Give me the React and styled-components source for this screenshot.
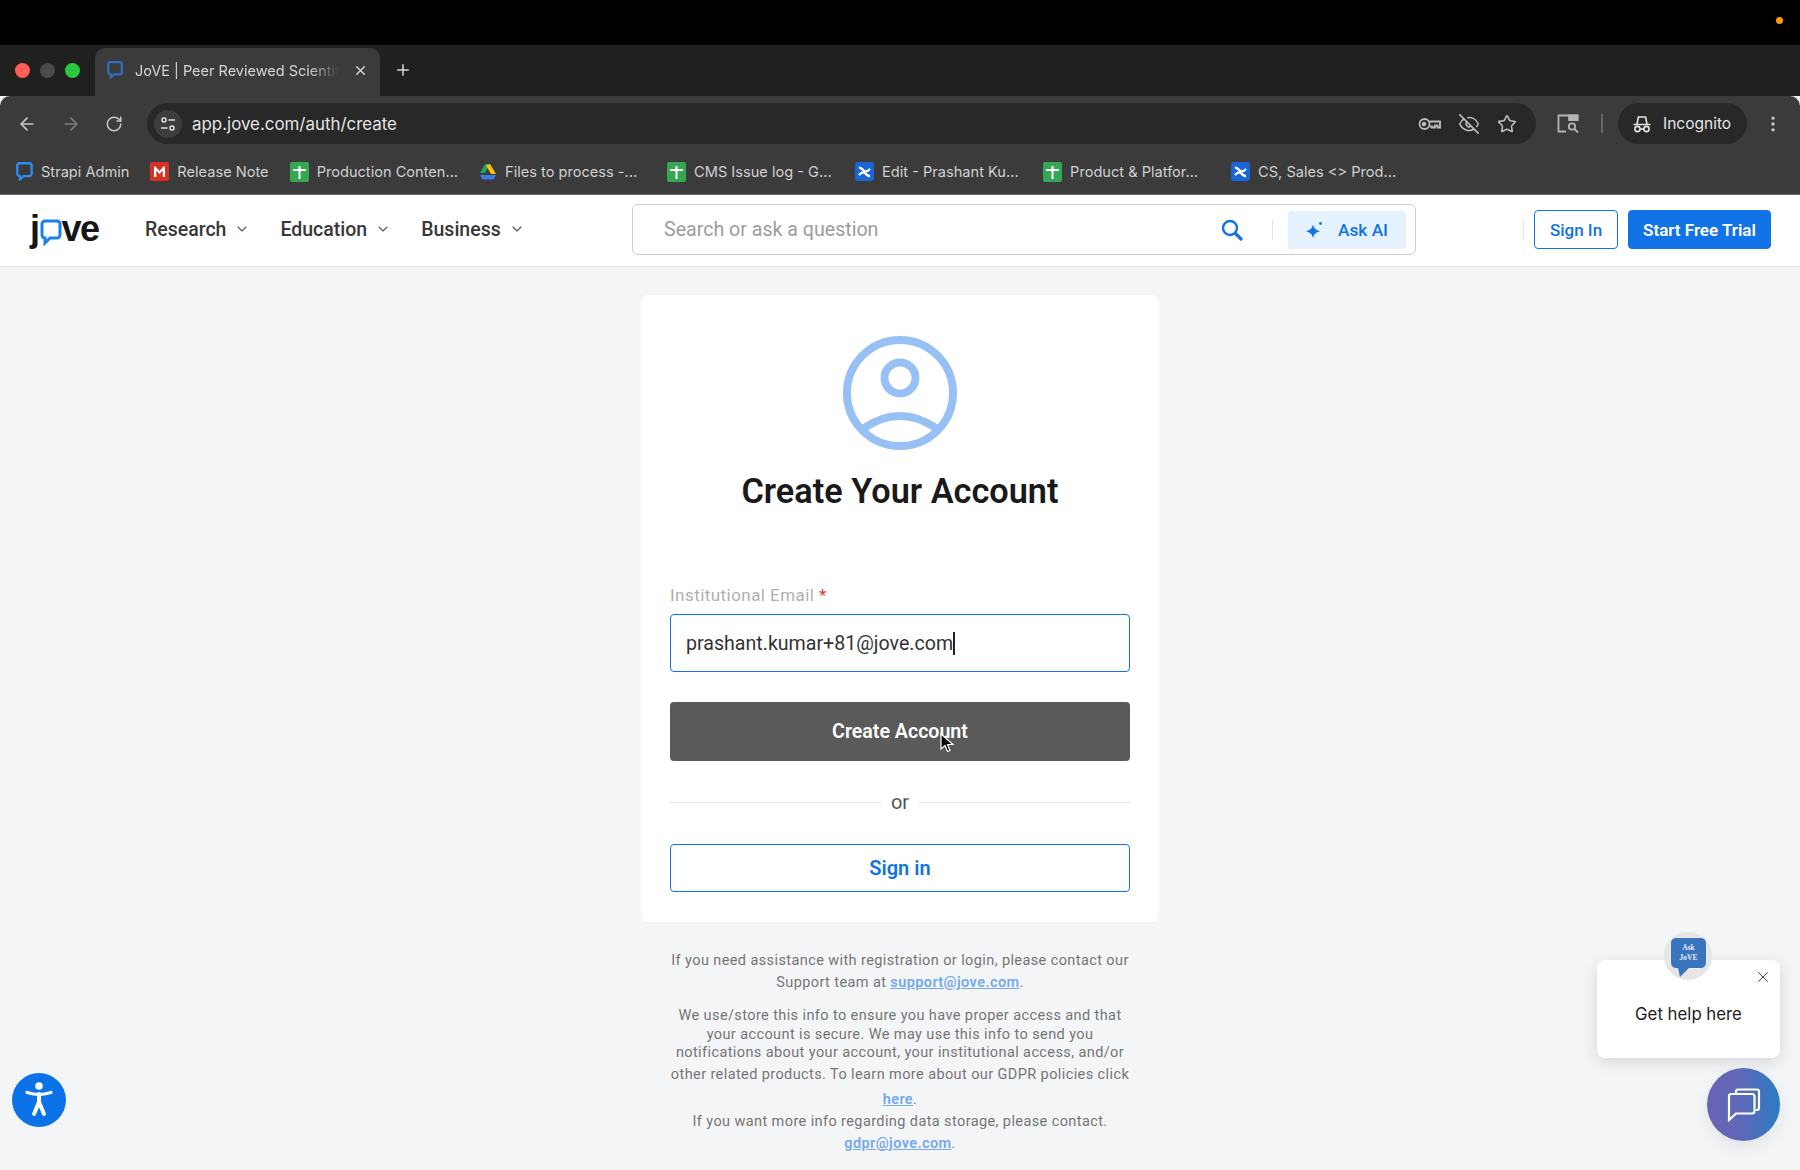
import React from 'react'
import styled, { createGlobalStyle } from 'styled-components'
import { ArrowLeft, ArrowRight, RotateCw, Plus, X, Star, EyeOff, EllipsisVertical, ChevronDown } from 'lucide-react'

const GlobalStyle = createGlobalStyle`
  html, body { margin: 0; padding: 0; background: #f4f5f7; }
  body { font-family: Roboto, "Liberation Sans", sans-serif; }
  * { box-sizing: border-box; }
`

const Screen = styled.div`
  position: relative;
  width: 1800px;
  height: 1170px;
  overflow: hidden;
  background: #f4f5f7;
`

/* browser chrome */
const MenuBar = styled.div`
  height: 45px;
  background: #000;
  display: flex;
  align-items: center;
  justify-content: flex-end;
  padding: 0 17px 5px 0;
`
const OrangeDot = styled.span`
  width: 7px;
  height: 7px;
  border-radius: 50%;
  background: #ff9a0a;
`
const TabStrip = styled.div`
  height: 51px;
  background: #202020;
  display: flex;
  align-items: flex-end;
  padding-left: 15px;
`
const Traffic = styled.div`
  display: flex;
  gap: 10px;
  align-self: flex-start;
  margin-top: 18px;
  width: 80px;
`
const Light = styled.span`
  width: 15px;
  height: 15px;
  border-radius: 50%;
  background: ${p => p.$color};
`
const Tab = styled.div`
  width: 285px;
  height: 48px;
  background: #3b3b3b;
  border-radius: 10px 10px 0 0;
  display: flex;
  align-items: center;
  padding: 0 12px 4px 12px;
  color: #d6d6d6;
  svg.fav { flex: none; margin-right: 12px; }
`
const TabTitle = styled.span`
  flex: 1;
  white-space: nowrap;
  overflow: hidden;
  font-family: Inter, sans-serif;
  font-size: 14.5px;
  -webkit-mask-image: linear-gradient(to right, #000 85%, transparent 100%);
  mask-image: linear-gradient(to right, #000 85%, transparent 100%);
`
const TabClose = styled.span`
  display: flex;
  margin-left: 14px;
`
const NewTab = styled.div`
  align-self: center;
  margin: 2px 0 4px 14px;
  color: #d6d6d6;
  display: flex;
`
const Toolbar = styled.div`
  height: 52px;
  background: #3b3b3b;
  border-radius: 10px 10px 0 0;
  display: flex;
  align-items: center;
  padding: 3px 0 0 17px;
  color: #c8c8c8;
`
const NavIcons = styled.div`
  display: flex;
  align-items: center;
  gap: 24px;
  width: 130px;
`
const Omnibox = styled.div`
  width: 1389px;
  height: 41px;
  border-radius: 21px;
  background: #282828;
  display: flex;
  align-items: center;
  padding: 0 19px 0 7px;
`
const SiteInfo = styled.span`
  width: 28px;
  height: 28px;
  border-radius: 50%;
  background: #3d3d3d;
  display: flex;
  align-items: center;
  justify-content: center;
  margin-right: 10px;
`
const Url = styled.span`
  flex: 1;
  color: #e4e4e4;
  font-family: Inter, sans-serif;
  font-size: 16.9px;
`
const OmniIcons = styled.div`
  display: flex;
  align-items: center;
  gap: 17px;
  color: #bcbcbc;
`
const ToolRight = styled.div`
  display: flex;
  align-items: center;
  margin-left: 21px;
`
const ToolSep = styled.span`
  width: 2px;
  height: 19px;
  background: #666;
  margin: 0 15px 0 22px;
`
const IncognitoPill = styled.div`
  width: 129px;
  height: 41px;
  border-radius: 21px;
  background: #282828;
  color: #e4e4e4;
  display: flex;
  align-items: center;
  gap: 12px;
  padding-left: 15px;
  font-family: Inter, sans-serif;
  font-size: 15.5px;
  margin-right: 16px;
`
const Bookmarks = styled.div`
  height: 47px;
  background: #3b3b3b;
  border-bottom: 1px solid #6a6a6a;
  display: flex;
  align-items: center;
  padding: 1px 0 0 16px;
  gap: 21px;
`
const Bookmark = styled.div`
  display: flex;
  align-items: center;
  gap: 8px;
  min-width: ${p => (p.$clipped ? '167px' : '0')};
  color: #d0d0d0;
  font-family: Inter, sans-serif;
  font-size: 14.6px;
  white-space: nowrap;
`

/* site header */
const Header = styled.header`
  height: 72px;
  background: #fff;
  border-bottom: 1px solid #e4e4e6;
  display: flex;
  align-items: center;
  padding: 0 29px 3px 30px;
`
const Logo = styled.div`
  width: 115px;
  flex: none;
  display: flex;
  align-items: center;
  font-family: "Liberation Sans", sans-serif;
  font-weight: 700;
  font-size: 36px;
  letter-spacing: -1.5px;
  color: #161616;
  line-height: 1;
  svg { margin: 6px 0 0 1px; }
`
const MainNav = styled.nav`
  width: 487px;
  flex: none;
  display: flex;
  align-items: center;
`
const NavItem = styled.div`
  display: flex;
  align-items: center;
  gap: 8px;
  font-size: 19.5px;
  font-weight: 500;
  color: #383838;
  margin-right: 30px;
  svg { color: #555; }
`
const SearchBox = styled.div`
  width: 784px;
  height: 51px;
  flex: none;
  margin-top: 1px;
  border: 1px solid #cfcfcf;
  border-radius: 6px;
  display: flex;
  align-items: center;
  padding: 0 9px 0 31px;
`
const Placeholder = styled.span`
  flex: 1;
  font-size: 19.6px;
  color: #9c9c9c;
`
const SearchDivider = styled.span`
  width: 1px;
  height: 20px;
  background: #e3e3e3;
  margin: 0 15px 0 29px;
`
const AskButton = styled.button`
  width: 118px;
  height: 38px;
  border: 0;
  border-radius: 4px;
  background: #e5f1fd;
  color: #1273e6;
  font: 500 17.3px Roboto, sans-serif;
  display: flex;
  align-items: center;
  justify-content: center;
  gap: 15px;
`
const HeaderRight = styled.div`
  margin: 1px 0 0 auto;
  display: flex;
  align-items: center;
  gap: 10px;
`
const HeaderDivider = styled.span`
  width: 1px;
  height: 20px;
  background: #e6e6e6;
`
const HeaderButton = styled.button`
  height: 39px;
  width: ${p => p.$width}px;
  border: 1px solid #1273e6;
  border-radius: 4px;
  background: ${p => (p.$solid ? '#1273e6' : '#fff')};
  color: ${p => (p.$solid ? '#fff' : '#1273e6')};
  font: ${p => (p.$solid ? 600 : 500)} 17px Roboto, sans-serif;
`

/* form card */
const Main = styled.main`
  display: flex;
  flex-direction: column;
  align-items: center;
  padding-top: 28px;
`
const Card = styled.section`
  width: 518px;
  height: 627px;
  background: #fff;
  border-radius: 8px;
  padding: 41px 29px 30px;
  display: flex;
  flex-direction: column;
  align-items: center;
`
const Title = styled.h1`
  margin: 19px 0 0;
  font-size: 34.3px;
  line-height: 44px;
  font-weight: 600;
  color: #1a1a1a;
`
const FieldLabel = styled.label`
  align-self: flex-start;
  margin-top: 72px;
  font-size: 17px;
  line-height: 20px;
  letter-spacing: 0.45px;
  color: #b0b0b0;
  span { color: #e53935; }
`
const EmailBox = styled.div`
  width: 460px;
  height: 58px;
  margin-top: 9px;
  border: 1px solid #1273e6;
  border-radius: 4px;
  display: flex;
  align-items: center;
  padding-left: 15px;
  font-size: 19.6px;
  color: #333;
`
const Caret = styled.span`
  width: 1.5px;
  height: 23px;
  background: #222;
`
const CreateButton = styled.button`
  position: relative;
  width: 460px;
  height: 59px;
  margin-top: 30px;
  border: 0;
  border-radius: 4px;
  background: #5a5a5a;
  color: #fff;
  font: 600 19.6px Roboto, sans-serif;
`
const Pointer = styled.svg`
  position: absolute;
  left: 270px;
  top: 31px;
`
const OrRow = styled.div`
  width: 460px;
  margin: 30px 0 31px;
  height: 22px;
  display: flex;
  align-items: center;
  gap: 10px;
  font-size: 20px;
  color: #555;
  &::before, &::after {
    content: '';
    flex: 1;
    height: 1px;
    background: #e4e4e4;
  }
`
const SignInButton = styled.button`
  width: 460px;
  height: 48px;
  border: 1px solid #1273e6;
  border-radius: 4px;
  background: #fff;
  color: #1273e6;
  font: 600 20px Roboto, sans-serif;
`
const Notice = styled.div`
  width: 480px;
  margin-top: 28px;
  text-align: center;
  font-size: 14.5px;
  letter-spacing: 0.4px;
  color: #757575;
`
const NoticeBlock = styled.p`
  margin: ${p => p.$gap || 0}px 0 0;
  line-height: ${p => p.$line || 22}px;
`
const NoticeLink = styled.a`
  color: #74a9ee;
  font-weight: 600;
  text-decoration: underline;
`

/* floating widgets */
const AccessButton = styled.div`
  position: absolute;
  left: 12px;
  top: 1073px;
  width: 54px;
  height: 54px;
  border-radius: 50%;
  background: #0b72e7;
  display: flex;
  align-items: center;
  justify-content: center;
`
const HelpPopup = styled.div`
  position: absolute;
  left: 1597px;
  top: 960px;
  width: 183px;
  height: 98px;
  background: #fff;
  border-radius: 8px;
  box-shadow: 0 4px 16px rgba(0, 0, 0, 0.13);
  display: flex;
  align-items: center;
  justify-content: center;
  padding-top: 10px;
  font-family: Inter, sans-serif;
  font-size: 16.8px;
  color: #1c1c1c;
`
const PopupClose = styled.span`
  position: absolute;
  right: 8px;
  top: 8px;
  display: flex;
  color: #333;
`
const AskBadge = styled.div`
  position: absolute;
  left: 1664px;
  top: 932px;
  width: 48px;
  height: 48px;
  border-radius: 50%;
  background: #e6e6e6;
`
const BadgeBubble = styled.div`
  position: absolute;
  left: 6px;
  top: 5px;
  width: 37px;
  height: 32px;
  border-radius: 6px;
  border: 1px solid #e8eef6;
  background: #3a74bf;
  color: #e6eefa;
  font: 700 7.5px/10px "Liberation Serif", serif;
  display: flex;
  align-items: center;
  justify-content: center;
  text-align: center;
  &::after {
    content: '';
    position: absolute;
    left: 7px;
    bottom: -9px;
    border-left: 2px solid transparent;
    border-right: 9px solid transparent;
    border-top: 9px solid #3a74bf;
  }
`
const ChatButton = styled.div`
  position: absolute;
  left: 1707px;
  top: 1068px;
  width: 73px;
  height: 73px;
  border-radius: 50%;
  background: linear-gradient(90deg, #6a62b4 0%, #5f68b8 45%, #2a7cc4 100%);
  box-shadow: 0 6px 18px rgba(0, 0, 0, 0.08);
  display: flex;
  align-items: center;
  justify-content: center;
`

/* drawn icons */
const BubbleIcon = ({ color = '#2f6fc0', size = 16 }) => (
  <svg className="fav" width={size} height={size + 2} viewBox="0 0 16 18" fill="none">
    <path d="M3.5 1.2h9A2.3 2.3 0 0 1 14.8 3.5v7.5a2.3 2.3 0 0 1-2.3 2.3H7L3.6 16.5v-3.2A2.3 2.3 0 0 1 1.2 11V3.5a2.3 2.3 0 0 1 2.3-2.3Z" stroke={color} strokeWidth="2.2" />
  </svg>
)
const GmailIcon = () => (
  <svg width="19" height="19" viewBox="0 0 19 19">
    <rect width="19" height="19" rx="2" fill="#d93025" />
    <path d="M4 15V4.5h1.5L9.5 9l4-4.5H15V15h-2.3V8.6L9.5 12 6.3 8.6V15Z" fill="#fff" />
  </svg>
)
const SheetIcon = () => (
  <svg width="19" height="20" viewBox="0 0 19 20">
    <rect width="19" height="20" rx="2" fill="#34a853" />
    <path d="M3 7h13v2H3z M8.5 4h2v13h-2z" fill="#fff" />
  </svg>
)
const DriveIcon = () => (
  <svg width="18" height="17" viewBox="0 0 18 17">
    <path d="M6 1h5l-5 9H1Z" fill="#1fa463" />
    <path d="M11 1l6 10h-5L7 2.5Z" fill="#ffc107" />
    <path d="M1 12h16l-2.5 4.5h-11Z" fill="#3b7bea" />
  </svg>
)
const ConfluenceIcon = () => (
  <svg width="19" height="19" viewBox="0 0 19 19">
    <rect width="19" height="19" rx="3" fill="#1a66d6" />
    <path d="M4 6c3-1 4 3 6 3.5 2 .3 3-.5 5-2.5M4 13c2-2 3-3 5-2.5 2 .5 3 4 6 3.5" stroke="#fff" strokeWidth="2.4" fill="none" />
  </svg>
)
const TuneIcon = () => (
  <svg width="16" height="16" viewBox="0 0 16 16" fill="none" stroke="#e0e0e0" strokeWidth="1.5">
    <circle cx="4" cy="4" r="2" />
    <path d="M8.5 4H15M1 12h6.5" />
    <circle cx="12" cy="12" r="2" />
  </svg>
)
const KeyIcon = () => (
  <svg width="23" height="14" viewBox="0 0 23 14" fill="none" stroke="currentColor" strokeWidth="1.8">
    <circle cx="6.5" cy="7" r="5" />
    <circle cx="6" cy="7" r="1.4" fill="currentColor" />
    <path d="M11.5 4.5H22v6h-2.5V8.5H17v2h-3V9.5h-2.5" />
  </svg>
)
const LensIcon = () => (
  <svg width="22" height="20" viewBox="0 0 22 20" fill="none" stroke="#b4b4b4" strokeWidth="1.8">
    <path d="M9 17.5H1.5V1.5h19V7" />
    <path d="M12 1.5h8.5V6H12Z" fill="#b4b4b4" />
    <circle cx="15" cy="12.5" r="3.2" />
    <path d="M17.5 15l3.5 3.5" />
  </svg>
)
const IncognitoIcon = () => (
  <svg width="18" height="18" viewBox="0 0 18 18" fill="none" stroke="#e4e4e4" strokeWidth="1.6">
    <path d="M4 9l1.4-7h7.2L14 9M0.5 9.5h17" />
    <circle cx="4.5" cy="14" r="2.6" />
    <circle cx="13.5" cy="14" r="2.6" />
    <path d="M7 14h4" />
  </svg>
)
const SearchGlyph = () => (
  <svg width="22" height="22" viewBox="0 0 22 22" fill="none" stroke="#1273e6">
    <circle cx="9" cy="9" r="7" strokeWidth="2.4" />
    <path d="M14.5 14.5L20 20" strokeWidth="3.2" strokeLinecap="round" />
  </svg>
)
const SparkIcon = () => (
  <svg width="17" height="18" viewBox="0 0 17 18" fill="#1273e6">
    <path d="M7 3.5Q8 9 14 10.2Q8 11.5 7 17Q6 11.5 0 10.2Q6 9 7 3.5Z" />
    <circle cx="14.5" cy="2.5" r="1.4" />
  </svg>
)
const PersonIcon = () => (
  <svg width="114" height="114" viewBox="0 0 114 114" fill="none" stroke="#97c1f5" strokeWidth="8">
    <circle cx="57" cy="57" r="53" />
    <circle cx="57" cy="42" r="15.5" />
    <path d="M21 92Q57 68 93 92" />
  </svg>
)
const AccessIcon = () => (
  <svg width="28" height="38" viewBox="0 0 28 38" fill="none" stroke="#fff" strokeLinecap="round">
    <circle cx="14" cy="5" r="3.8" fill="#fff" stroke="none" />
    <path d="M2 11.5c4 1.2 8 2 12 2s8-.8 12-2" strokeWidth="3.2" />
    <path d="M14 13v8M14 21l-5 12M14 21l5 12" strokeWidth="4" />
  </svg>
)
const ChatIcon = () => (
  <svg width="34" height="34" viewBox="0 0 34 34" fill="none" stroke="#fff" strokeWidth="2.2">
    <path d="M9 5V3.5A2 2 0 0 1 11 1.5h19A2 2 0 0 1 32 3.5V20a2 2 0 0 1-2 2h-1" />
    <path d="M4 6h21a2.5 2.5 0 0 1 2.5 2.5V23a2.5 2.5 0 0 1-2.5 2.5H9L2 32V8a2 2 0 0 1 2-2Z" />
  </svg>
)

const BOOKMARKS = [
  { icon: <BubbleIcon color="#2f8cf0" size={17} />, label: 'Strapi Admin' },
  { icon: <GmailIcon />, label: 'Release Note' },
  { icon: <SheetIcon />, label: 'Production Conten...', clipped: true },
  { icon: <DriveIcon />, label: 'Files to process -...', clipped: true },
  { icon: <SheetIcon />, label: 'CMS Issue log - G...', clipped: true },
  { icon: <ConfluenceIcon />, label: 'Edit - Prashant Ku...', clipped: true },
  { icon: <SheetIcon />, label: 'Product & Platfor...', clipped: true },
  { icon: <ConfluenceIcon />, label: 'CS, Sales <> Prod...', clipped: true },
]

function BrowserChrome() {
  return (
    <>
      <MenuBar><OrangeDot /></MenuBar>
      <TabStrip>
        <Traffic>
          <Light $color="#ff5f57" />
          <Light $color="#4a4a4a" />
          <Light $color="#28c840" />
        </Traffic>
        <Tab>
          <BubbleIcon />
          <TabTitle>JoVE | Peer Reviewed Scientific</TabTitle>
          <TabClose><X size={15} strokeWidth={2.2} /></TabClose>
        </Tab>
        <NewTab><Plus size={18} strokeWidth={2} /></NewTab>
      </TabStrip>
      <Toolbar>
        <NavIcons>
          <ArrowLeft size={20} />
          <ArrowRight size={20} color="#7d7d7d" />
          <RotateCw size={18} />
        </NavIcons>
        <Omnibox>
          <SiteInfo><TuneIcon /></SiteInfo>
          <Url>app.jove.com/auth/create</Url>
          <OmniIcons>
            <KeyIcon />
            <EyeOff size={22} strokeWidth={1.7} />
            <Star size={20} strokeWidth={1.9} />
          </OmniIcons>
        </Omnibox>
        <ToolRight>
          <LensIcon />
          <ToolSep />
          <IncognitoPill><IncognitoIcon />Incognito</IncognitoPill>
          <EllipsisVertical size={20} />
        </ToolRight>
      </Toolbar>
      <Bookmarks>
        {BOOKMARKS.map(b => (
          <Bookmark key={b.label} $clipped={b.clipped}>{b.icon}{b.label}</Bookmark>
        ))}
      </Bookmarks>
    </>
  )
}

function SiteHeader() {
  return (
    <Header>
      <Logo>
        j
        <svg width="22" height="27" viewBox="0 0 22 27" fill="none">
          <path d="M5 2h12a3 3 0 0 1 3 3v11a3 3 0 0 1-3 3H10l-5 5v-5a3 3 0 0 1-3-3V5a3 3 0 0 1 3-3Z" stroke="#1a80ee" strokeWidth="3" />
        </svg>
        ve
      </Logo>
      <MainNav>
        {['Research', 'Education', 'Business'].map(n => (
          <NavItem key={n}>{n}<ChevronDown size={16} strokeWidth={1.6} /></NavItem>
        ))}
      </MainNav>
      <SearchBox>
        <Placeholder>Search or ask a question</Placeholder>
        <SearchGlyph />
        <SearchDivider />
        <AskButton><SparkIcon />Ask AI</AskButton>
      </SearchBox>
      <HeaderRight>
        <HeaderDivider />
        <HeaderButton $width={84}>Sign In</HeaderButton>
        <HeaderButton $width={143} $solid>Start Free Trial</HeaderButton>
      </HeaderRight>
    </Header>
  )
}

export default function App() {
  return (
    <Screen>
      <GlobalStyle />
      <BrowserChrome />
      <SiteHeader />
      <Main>
        <Card>
          <PersonIcon />
          <Title>Create Your Account</Title>
          <FieldLabel>Institutional Email <span>*</span></FieldLabel>
          <EmailBox>prashant.kumar+81@jove.com<Caret /></EmailBox>
          <CreateButton>
            Create Account
            <Pointer width="15" height="21" viewBox="0 0 15 21">
              <path d="M1 1v15l4-3.5 2.5 6 2.5-1-2.5-6H13Z" fill="#000" stroke="#fff" strokeWidth="1.2" />
            </Pointer>
          </CreateButton>
          <OrRow>or</OrRow>
          <SignInButton>Sign in</SignInButton>
        </Card>
        <Notice>
          <NoticeBlock>
            If you need assistance with registration or login, please contact our<br />
            Support team at <NoticeLink>support@jove.com</NoticeLink>.
          </NoticeBlock>
          <NoticeBlock $gap={13} $line={18.5}>
            We use/store this info to ensure you have proper access and that<br />
            your account is secure. We may use this info to send you<br />
            notifications about your account, your institutional access, and/or
          </NoticeBlock>
          <NoticeBlock $gap={1}>other related products. To learn more about our GDPR policies click</NoticeBlock>
          <NoticeBlock $gap={3}>
            <NoticeLink>here</NoticeLink>.<br />
            If you want more info regarding data storage, please contact.<br />
            <NoticeLink>gdpr@jove.com</NoticeLink>.
          </NoticeBlock>
        </Notice>
      </Main>
      <AccessButton><AccessIcon /></AccessButton>
      <HelpPopup>
        Get help here
        <PopupClose><X size={18} strokeWidth={1.2} /></PopupClose>
      </HelpPopup>
      <AskBadge><BadgeBubble>Ask<br />JoVE</BadgeBubble></AskBadge>
      <ChatButton><ChatIcon /></ChatButton>
    </Screen>
  )
}
